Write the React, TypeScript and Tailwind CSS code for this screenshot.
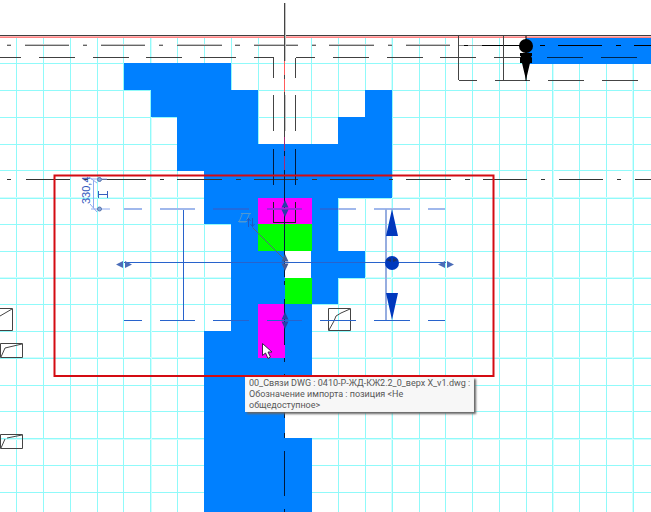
import React from "react";

const columns = [16, 43, 70, 97, 123, 150, 177, 204, 231, 258, 284, 311, 338, 365, 392, 419, 445, 472, 499, 526, 552, 579, 606, 633];
const softColumns = [151, 391, 553, 632];
const rows = [63, 90, 117, 144, 170, 198, 224, 251, 278, 304, 331, 358, 385, 411, 438, 465, 492];
const softRows = [197, 277, 357, 439];

function Grid() {
  return (
    <g shapeRendering="crispEdges" strokeWidth="1">
      <g stroke="#90fafa">
        {columns.map((x) => (
          <path key={x} d={`M${x + 0.5} 38V512`} />
        ))}
        {rows.map((y) => (
          <path key={y} d={`M0 ${y + 0.5}H651`} />
        ))}
      </g>
      <g stroke="#d3fdfd">
        {softColumns.map((x) => (
          <path key={x} d={`M${x + 0.5} 38V512`} />
        ))}
        {softRows.map((y) => (
          <path key={y} d={`M0 ${y + 0.5}H651`} />
        ))}
      </g>
    </g>
  );
}

function Zones() {
  return (
    <g shapeRendering="crispEdges">
      <path
        fill="#0080ff"
        d="M124 63H231V90H258V144H338V117H365V90H392V198H338V251H365V278H338V304H312V411H285V438H312V512H204V331H231V224H204V171H177V117H151V90H124Z"
      />
      <path fill="#fff" d="M285 411h27v27h-27zM285 251h26v27h-26z" />
      <path fill="#ff00ff" d="M258 198h54v26h-54zM258 304h27v54h-27z" />
      <path fill="#00ff00" d="M258 224h54v27h-54zM285 278h27v26h-27z" />
      <path fill="#0080ff" d="M526 38h125v26h-125z" />
    </g>
  );
}

function AxisLines() {
  return (
    <g shapeRendering="crispEdges" fill="none">
      <path stroke="#404040" d="M0 35.5H651" />
      <path stroke="#ffb3b3" d="M0 36.5H651" />
      <path stroke="#ff8080" d="M0 37.5H651" />
      <g stroke="#858585">
        <path stroke="#666" d="M7 45.5h4M25 45.5h44M83 45.5h4M101 45.5h44M159 45.5h4M177 45.5h45M235 45.5h5M254 45.5h44M312 45.5h4M329 45.5h45M388 45.5h4M406 45.5h44" />
        <path stroke="#c4c4c4" d="M7 44.5h4M25 44.5h44M83 44.5h4M101 44.5h44M159 44.5h4M177 44.5h45M235 44.5h5M254 44.5h44M312 44.5h4M329 44.5h45M388 44.5h4M406 44.5h44" />
        <path d="M459 45.5h23" />
      </g>
      <path stroke="#000" d="M464 45.5h4M482 45.5h40M540 45.5h5M558 45.5h44M616 45.5h5M634 45.5h17" />
      <path stroke="#404040" d="M0 57.5h21M39 57.5h36M93 57.5h36M146 57.5h36M200 57.5h36M254 57.5h20M296 57.5h19M333 57.5h36M387 57.5h36M440 57.5h36M494 57.5h32" />
      <path stroke="#00264d" d="M547 57.5h36M601 57.5h36" />
      <path stroke="#333" d="M7 179.5h4M26 179.5h44M84 179.5h4M102 179.5h44M160 179.5h4M177 179.5h45M236 179.5h5M254 179.5h44M312 179.5h5M330 179.5h44M389 179.5h4M406 179.5h45M465 179.5h5M483 179.5h44M541 179.5h4M559 179.5h44M617 179.5h4M635 179.5h16" />
      <path stroke="#444" d="M458.5 36v44M503.5 36v44M459 80.5h18M495 80.5h35M548 80.5h36M602 80.5h36" />
      <path stroke="#444" d="M273.5 58v20M295.5 58v20M273.5 95v36M295.5 95v36" />
      <path stroke="#001a3d" d="M273.5 149v36M295.5 149v36" />
      <path stroke="#222" d="M273.5 202v20h22v-20" />
      <path stroke="#444" d="M284.5 3v58M284.5 75v4M284.5 92v45" />
      <path stroke="#ff5c5c" d="M284.5 61v14M284.5 79v13" />
      <path stroke="#a42a76" d="M284.5 137v14M284.5 156v14" />
      <path stroke="#001a3d" d="M284.5 151v5M284.5 170v107M284.5 281v4M284.5 299v46M284.5 358v4M284.5 374v44M284.5 433v5M284.5 451v45M284.5 509v3" />
      <path stroke="#c4c4c4" d="M285.5 3v58M285.5 95v36" />
    </g>
  );
}

function LevelMarker() {
  return (
    <g fill="#000">
      <rect x="525.5" y="36" width="1" height="45" />
      <circle cx="526" cy="46" r="7" />
      <path d="M520 53h12v3h-1l1 2v5h-2l-4 17-4-17h-2v-5l1-2h-1z" />
    </g>
  );
}

function OpeningSymbols() {
  return (
    <g fill="none" stroke="#444" strokeWidth="1">
      <path d="M0 308.5H12.5V330.5H0M0 316L12 309" />
      <path d="M.5 343.5h22v14H.5zM1 357l4-9 17-4" />
      <path d="M.5 434.5h22v14H.5zM1 448l4-9M7 438l15-3" />
      <path d="M328.5 308.5h22v22h-22zM329 330l5-9 2-5 5-3 9-4" />
    </g>
  );
}

function SelectedElement() {
  return (
    <g fill="none">
      <g shapeRendering="crispEdges">
        <path stroke="#2863cc" d="M124 262.5H446M183.5 209v111" />
        <path stroke="#2863cc" d="M124 320.5h18M160 320.5h35M213 320.5h36M267 320.5h35M320 320.5h36M374 320.5h36M428 320.5h17" />
        <path strokeWidth="2" stroke="#a0b8ec" d="M124 209h18M160 209h35M374 209h36M428 209h17M338 209h18" />
        <path strokeWidth="2" stroke="#206bdf" d="M213 209h36M320 209h18" />
        <path strokeWidth="2" stroke="#a720e0" d="M267 209h35" />
        <path strokeWidth="2" stroke="#96ade0" d="M386 209v111" />
      </g>
      <g fill="#0038bd">
        <path d="M392 209l6 27h-12zM392 320l6-27h-12z" />
        <circle cx="392" cy="263" r="7" />
      </g>
      <path d="M386 260l5-2v4zM398 260l-5-2v4z" fill="#193170" />
      <g fill="#4a6cb8">
        <path d="M116 264.5l7-3.5v7zM132 264.5l-7-3.5v7zM438 264.5l7-3.5v7zM454 264.5l-7-3.5v7z" />
      </g>
      <g fill="#2840a8">
        <path d="M285 200l3.500 7.500h-7zM285 217l3.500-7.500h-7zM285 312l3.500 7.500h-7zM285 329l3.500-7.500h-7z" />
        <path fill="#465a96" d="M285 254l3.500 7.500h-7zM285 271l3.500-7.500h-7z" />
      </g>
      <path d="M252.500 227.500l32 32" stroke="#536879" />
      <g stroke="#5098cf">
        <path d="M242.500 213.500h7l-3.500 8.500h-7zM238 221.500h9M241 213.500h10" />
        <path stroke="#1c58c4" d="M248.500 218v9M252.500 218v9M246.500 221l2-2.500 2 2.500M250.500 224l2 2.500 2-2.500" />
      </g>
      <g stroke="#8faaf0">
        <path d="M93.500 180v28M91 209h19M89 177l8 6M90 204l7 8M91 179h16" />
      </g>
      <g fill="#87aadb" stroke="#5a75af">
        <circle cx="99.500" cy="179.500" r="2" />
        <circle cx="99.500" cy="209" r="2" />
      </g>
      <path d="M98 194.500h10M98.500 191v7M107.500 191v7" stroke="#3760be" />
      <text
        transform="translate(90 204) rotate(-90)"
        fill="#3159bd"
        stroke="none"
        className="font-['Liberation_Sans',sans-serif] text-[11px]"
      >
        330,4
      </text>
    </g>
  );
}

function Drawing() {
  return (
    <svg className="block h-auto w-full" viewBox="0 0 651 512" role="img" aria-label="План">
      <Grid />
      <Zones />
      <AxisLines />
      <LevelMarker />
      <OpeningSymbols />
      <SelectedElement />
      <rect x="54.500" y="175.500" width="439" height="200.500" fill="none" stroke="#d40b12" strokeWidth="2" />
      <path
        d="M262.500 343.500v12l3-2.500 2.500 5.500 2.500-1.500-2.500-5h4z"
        fill="#fff"
        stroke="#34244a"
        strokeWidth="1"
      />
    </svg>
  );
}

export default function App() {
  return (
    <main className="relative w-full overflow-hidden bg-white">
      <Drawing />
      <div
        role="tooltip"
        className="absolute top-[377px] left-[245px] w-max border border-[#f4f4f4] bg-[#f7f7f7] px-[3px] font-['Roboto',sans-serif] text-[9px] leading-[11px] text-[#575757] shadow-[2px_2px_2px_#666]"
      >
        <p className="whitespace-nowrap">00_Связи DWG : 0410-Р-ЖД-КЖ2.2_0_верх X_v1.dwg :</p>
        <p>Обозначение импорта : позиция &lt;Не</p>
        <p>общедоступное&gt;</p>
      </div>
    </main>
  );
}
